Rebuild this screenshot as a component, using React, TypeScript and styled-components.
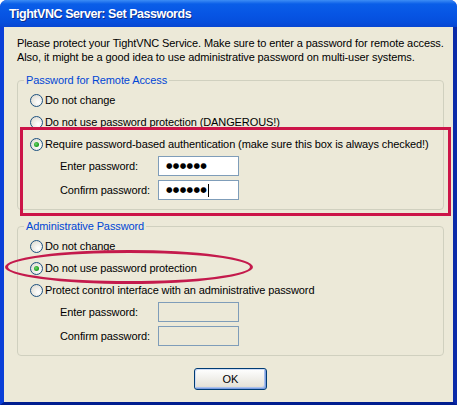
import React from "react";
import styled, { createGlobalStyle } from "styled-components";

const Global = createGlobalStyle`
  html, body { margin: 0; padding: 0; background: #ffffff; }
  body {
    font-family: "Liberation Sans", Arial, sans-serif;
    font-size: 11px;
    letter-spacing: -0.1px;
    color: #000;
  }
`;

const Window = styled.div`
  width: 457px;
  display: flex;
  flex-direction: column;
  background: #0831d9;
  border-radius: 7px 7px 0 0;
  overflow: hidden;
`;

const TitleBar = styled.div`
  height: 27px;
  display: flex;
  align-items: center;
  padding-left: 9px;
  background: linear-gradient(
    to bottom,
    #3d8df5 0px,
    #0a5ee8 4px,
    #0755e4 14px,
    #064fdd 22px,
    #0846d2 27px
  );
  color: #fff;
  font-family: "Liberation Sans", Arial, sans-serif;
  font-weight: bold;
  font-size: 12.5px;
  letter-spacing: -0.45px;
  text-shadow: 1px 1px 0 #0b2d8c;
`;

const Frame = styled.div`
  border-left: 4px solid #0a3fd8;
  border-right: 4px solid #0b2aa8;
  border-bottom: 3px solid #001d8f;
`;

const Body = styled.div`
  background: #ece9d8;
  padding: 9px 9px 12px 13px;
  display: flex;
  flex-direction: column;
`;

const Intro = styled.p`
  margin: 0;
  line-height: 14px;
  white-space: nowrap;
`;

const Group = styled.fieldset`
  position: relative;
  margin: 9px 0 0 0;
  padding: 0;
  border: 1px solid #d0d0bf;
  border-radius: 4px;
  min-width: 0;
`;

const Legend = styled.legend`
  margin-left: 6px;
  padding: 0 2px;
  color: #0046d5;
  line-height: 14px;
`;

const GroupInner = styled.div`
  padding: 2px 0 9px 12px;
  display: flex;
  flex-direction: column;
`;

const RadioRow = styled.div`
  height: 22px;
  display: flex;
  align-items: center;
  gap: 2px;
  white-space: nowrap;
`;

const RadioDot = styled.span<{ $checked?: boolean }>`
  box-sizing: border-box;
  width: 13px;
  height: 13px;
  border-radius: 50%;
  border: 1px solid #1c5180;
  background: radial-gradient(circle at 65% 65%, #ffffff 0%, #e4e2da 70%, #d2d0c6 100%);
  display: flex;
  align-items: center;
  justify-content: center;
  flex: none;
  &::after {
    content: "";
    display: ${(p) => (p.$checked ? "block" : "none")};
    width: 5px;
    height: 5px;
    border-radius: 50%;
    background: radial-gradient(circle at 40% 40%, #6fd36f 0%, #21a121 60%, #1a8a1a 100%);
  }
`;

const InputRow = styled.div<{ $first?: boolean }>`
  display: flex;
  align-items: center;
  height: 20px;
  margin-top: ${(p) => (p.$first ? "1px" : "4px")};
  padding-left: 30px;
`;

const FieldLabel = styled.span`
  width: 98px;
`;

const Field = styled.div<{ $disabled?: boolean }>`
  box-sizing: border-box;
  width: 81px;
  height: 20px;
  border: 1px solid #7f9db9;
  background: ${(p) => (p.$disabled ? "#ece9d8" : "#ffffff")};
  display: flex;
  align-items: center;
  padding-left: 7px;
`;

const Dots = styled.span`
  font-family: "DejaVu Sans", sans-serif;
  font-size: 7.5px;
  letter-spacing: 0.3px;
  line-height: 1;
`;

const Caret = styled.span`
  width: 1px;
  height: 13px;
  background: #000;
  margin-left: 1px;
`;

const Highlight = styled.div`
  position: absolute;
  left: 2px;
  top: 40px;
  width: 431px;
  height: 89px;
  box-sizing: border-box;
  border: 3px solid #cc1448;
  pointer-events: none;
`;

const Ellipse = styled.div`
  position: absolute;
  left: -13px;
  top: 17px;
  width: 248px;
  height: 34px;
  box-sizing: border-box;
  border: 3px solid #c41a4c;
  border-radius: 50%;
  pointer-events: none;
`;

const ButtonRow = styled.div`
  display: flex;
  justify-content: center;
  margin-top: 12px;
`;

const Button = styled.button`
  width: 73px;
  height: 22px;
  border: 1px solid #003c74;
  border-radius: 3px;
  background: linear-gradient(to bottom, #ffffff 0%, #f3f2ee 40%, #e6e3d9 85%, #d6d0c5 100%);
  box-shadow: inset -1px -1px 0 #7d9ee0, inset 1px 1px 0 #cfdcf5, inset -2px -2px 0 #a9c0ec;
  font-family: "Liberation Sans", Arial, sans-serif;
  font-size: 11px;
  color: #000;
  padding: 0;
`;

function Radio({ label, checked }: { label: string; checked?: boolean }) {
  return (
    <RadioRow>
      <RadioDot $checked={checked} />
      <span>{label}</span>
    </RadioRow>
  );
}

export default function App() {
  return (
    <>
      <Global />
      <Window>
        <TitleBar>TightVNC Server: Set Passwords</TitleBar>
        <Frame>
          <Body>
            <Intro>
              Please protect your TightVNC Service. Make sure to enter a password for remote access.
              <br />
              Also, it might be a good idea to use administrative password on multi-user systems.
            </Intro>
            <Group>
              <Legend>Password for Remote Access</Legend>
              <GroupInner>
                <Radio label="Do not change" />
                <Radio label="Do not use password protection (DANGEROUS!)" />
                <Radio label="Require password-based authentication (make sure this box is always checked!)" checked />
                <InputRow $first>
                  <FieldLabel>Enter password:</FieldLabel>
                  <Field>
                    <Dots>●●●●●●</Dots>
                  </Field>
                </InputRow>
                <InputRow>
                  <FieldLabel>Confirm password:</FieldLabel>
                  <Field>
                    <Dots>●●●●●●</Dots>
                    <Caret />
                  </Field>
                </InputRow>
              </GroupInner>
              <Highlight />
            </Group>
            <Group>
              <Legend>Administrative Password</Legend>
              <GroupInner>
                <Radio label="Do not change" />
                <Radio label="Do not use password protection" checked />
                <Radio label="Protect control interface with an administrative password" />
                <InputRow $first>
                  <FieldLabel>Enter password:</FieldLabel>
                  <Field $disabled />
                </InputRow>
                <InputRow>
                  <FieldLabel>Confirm password:</FieldLabel>
                  <Field $disabled />
                </InputRow>
              </GroupInner>
              <Ellipse />
            </Group>
            <ButtonRow>
              <Button>OK</Button>
            </ButtonRow>
          </Body>
        </Frame>
      </Window>
    </>
  );
}
